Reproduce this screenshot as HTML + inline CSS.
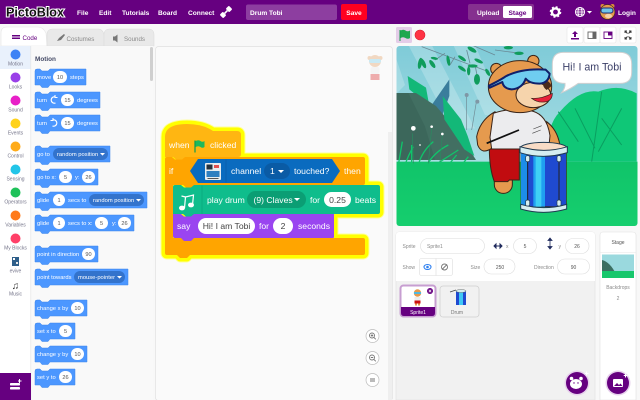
<!DOCTYPE html>
<html><head><meta charset="utf-8"><style>
html,body{margin:0;padding:0;width:640px;height:400px;overflow:hidden;background:#f8f8f8}
svg{display:block;font-family:"Liberation Sans",sans-serif;filter:blur(.3px)}
.m{font-size:6.6px;font-weight:700;fill:#fff}
.c{font-size:5px;fill:#75758a;text-anchor:middle}
.b{font-size:5.8px;fill:#fff}
.v{font-size:5.6px;fill:#555;text-anchor:middle}
.s{font-size:8.6px;fill:#fff}
.sv{font-size:8.6px;fill:#444;text-anchor:middle}
.p{fill:#4c97ff;stroke:#3f86ea;stroke-width:.5}
.l{font-size:5px;fill:#8a8a8a}
.d{font-size:5px;fill:#555;text-anchor:middle}
</style></head><body>
<svg width="640" height="400" viewBox="0 0 640 400" xmlns="http://www.w3.org/2000/svg">
<rect width="640" height="400" fill="#f8f8f8"/>

<!-- header -->
<rect width="640" height="24" fill="#660080"/>
<text x="6" y="16.500" font-size="12.600" font-weight="700" fill="#111" stroke="#fff" stroke-width="2" paint-order="stroke" textLength="58">PictoBlox</text>
<text class="m" x="77" y="15">File</text><text class="m" x="99" y="15">Edit</text><text class="m" x="122" y="15">Tutorials</text><text class="m" x="158" y="15">Board</text><text class="m" x="188" y="15">Connect</text>
<g transform="translate(226 12) rotate(45)" fill="#fff"><rect x="-2.500" y="-6.500" width="5" height="4.500" rx="1"/><rect x="-2.500" y="2" width="5" height="4.500" rx="1"/><rect x="-.8" y="-2" width="1.600" height="4"/></g>
<rect x="246" y="4.500" width="91" height="15.500" rx="2" fill="#8d3ea0"/>
<text class="m" x="250" y="15">Drum Tobi</text>
<rect x="341" y="4" width="26" height="16" rx="2" fill="#ff0020"/>
<text class="m" x="354" y="15" text-anchor="middle">Save</text>
<rect x="468" y="4" width="66" height="16" rx="2" fill="#85308f"/>
<text class="m" x="477" y="15">Upload</text>
<rect x="503" y="6" width="29" height="12" rx="1.500" fill="#fff"/>
<text x="517.500" y="15" font-size="6.600" font-weight="700" fill="#660080" text-anchor="middle">Stage</text>
<g transform="translate(555.500 12)"><circle r="3.600" fill="none" stroke="#fff" stroke-width="2.400"/><circle r="5" fill="none" stroke="#fff" stroke-width="1.600" stroke-dasharray="2 1.930"/></g>
<g transform="translate(580 12)" fill="none" stroke="#fff" stroke-width=".9"><circle r="4.600"/><ellipse rx="2" ry="4.600"/><path d="M-4.600 0H4.600M-4 -2.200H4M-4 2.200H4"/></g>
<path d="M587 11h5l-2.500 2.600z" fill="#fff"/>
<g transform="translate(607.500 12)"><circle cx="-5" cy="-6" r="2" fill="#d98a3c"/><circle cx="5" cy="-6" r="2" fill="#d98a3c"/><circle r="7.400" fill="#e49a4c" stroke="#3a2a20" stroke-width=".6"/><rect x="-6.500" y="-4" width="12" height="5" rx="2.400" fill="#6fc5e8" stroke="#1a2f7a"/><ellipse cx="1" cy="4" rx="3.500" ry="2.200" fill="#f5d2a8"/></g>
<text class="m" x="618" y="15">Login</text>

<!-- tabs -->
<path d="M1 46V33q0-6 6-6H38q5 0 8 6l1 13z" fill="#fff" stroke="#e5e5e5" stroke-width=".6"/>
<path d="M47 46V35q0-6 6-6H98q5 0 6 6V46z" fill="#e9e9e9" stroke="#ddd" stroke-width=".6"/>
<path d="M104 46V35q0-6 6-6H148q6 0 6 6V46z" fill="#e9e9e9" stroke="#ddd" stroke-width=".6"/>
<g fill="#660080"><rect x="12" y="35" width="8" height="1.500"/><rect x="12" y="37.500" width="8" height="1.500"/></g>
<text x="22.500" y="40" font-size="6.200" fill="#660080">Code</text>
<path d="M57 41l2-3 5-4 1 1-4 5z" fill="#777"/>
<text x="66.500" y="41" font-size="6.200" fill="#8a8a8a">Costumes</text>
<path d="M113 36.500h2l2.500-2v8l-2.500-2h-2z" fill="#777"/>
<text x="124" y="41" font-size="6.200" fill="#8a8a8a">Sounds</text>

<!-- categories -->
<rect x="0" y="46" width="31" height="354" fill="#fff"/>
<rect x="0" y="46" width="31" height="23" fill="#e9f1fc"/>
<rect x="31" y="46" width="122" height="354" fill="#f9f9f9"/>
<rect x="30.500" y="46" width=".6" height="354" fill="#e2e2e2"/>
<circle cx="15.500" cy="54.500" r="5" fill="#3d82f5"/><text class="c" x="15.500" y="65.500">Motion</text>
<circle cx="15.500" cy="77.500" r="5" fill="#9a3fe8"/><text class="c" x="15.500" y="88.500">Looks</text>
<circle cx="15.500" cy="100.500" r="5" fill="#e81fc8"/><text class="c" x="15.500" y="111.500">Sound</text>
<circle cx="15.500" cy="123.500" r="5" fill="#ffd21a"/><text class="c" x="15.500" y="134.500">Events</text>
<circle cx="15.500" cy="146.500" r="5" fill="#ffab19"/><text class="c" x="15.500" y="157.500">Control</text>
<circle cx="15.500" cy="169.500" r="5" fill="#22c5e8"/><text class="c" x="15.500" y="180.500">Sensing</text>
<circle cx="15.500" cy="192.500" r="5" fill="#1fc25a"/><text class="c" x="15.500" y="203.500">Operators</text>
<circle cx="15.500" cy="215.500" r="5" fill="#ff7a1a"/><text class="c" x="15.500" y="226.500">Variables</text>
<circle cx="15.500" cy="238.500" r="5" fill="#ff4068"/><text class="c" x="15.500" y="249.500">My Blocks</text>
<rect x="12" y="257" width="7" height="9" fill="#2f5f8a"/><rect x="13" y="258" width="2" height="2" fill="#fff"/><rect x="16" y="262" width="2" height="2" fill="#e8e8e8"/>
<text class="c" x="15.500" y="272.500">evive</text>
<text x="15.500" y="289" font-size="10" fill="#333" text-anchor="middle">♫</text>
<text class="c" x="15.500" y="295.500">Music</text>
<rect x="0" y="373" width="31" height="27" fill="#660080"/>
<g fill="#fff"><rect x="10" y="383" width="10" height="2.500" rx=".8"/><rect x="10" y="387" width="10" height="2.500" rx=".8"/><path d="M18 380.500h1v-1.500h1v1.500h1.500v1H20v1.500h-1V381.500h-1z"/></g>

<!-- palette -->
<text x="35" y="61" font-size="6.400" font-weight="700" fill="#444a66">Motion</text>
<rect x="150" y="47" width="3" height="34" rx="1.500" fill="#cfcfcf"/>
<path class="p" d="M35 71q0-2 2-2h3l2 2h6l2-2H86V85H50l-2 2.500h-6L40 85h-5z"/>
<path class="p" d="M35 94q0-2 2-2h3l2 2h6l2-2H100V108H50l-2 2.500h-6L40 108h-5z"/>
<path class="p" d="M35 117q0-2 2-2h3l2 2h6l2-2H100V131H50l-2 2.500h-6L40 131h-5z"/>
<path class="p" d="M35 148q0-2 2-2h3l2 2h6l2-2H110V162H50l-2 2.500h-6L40 162h-5z"/>
<path class="p" d="M35 171q0-2 2-2h3l2 2h6l2-2H98V185H50l-2 2.500h-6L40 185h-5z"/>
<path class="p" d="M35 194q0-2 2-2h3l2 2h6l2-2H147V208H50l-2 2.500h-6L40 208h-5z"/>
<path class="p" d="M35 217q0-2 2-2h3l2 2h6l2-2H134V231H50l-2 2.500h-6L40 231h-5z"/>
<path class="p" d="M35 248q0-2 2-2h3l2 2h6l2-2H98V262H50l-2 2.500h-6L40 262h-5z"/>
<path class="p" d="M35 271q0-2 2-2h3l2 2h6l2-2H128V285H50l-2 2.500h-6L40 285h-5z"/>
<path class="p" d="M35 302q0-2 2-2h3l2 2h6l2-2H87V316H50l-2 2.500h-6L40 316h-5z"/>
<path class="p" d="M35 325q0-2 2-2h3l2 2h6l2-2H75V339H50l-2 2.500h-6L40 339h-5z"/>
<path class="p" d="M35 348q0-2 2-2h3l2 2h6l2-2H87V362H50l-2 2.500h-6L40 362h-5z"/>
<path class="p" d="M35 371q0-2 2-2h3l2 2h6l2-2H75V385H50l-2 2.500h-6L40 385h-5z"/>
<g fill="#fff">
<rect x="53" y="71" width="14" height="12" rx="6"/>
<rect x="61" y="94" width="13" height="12" rx="6"/>
<rect x="61" y="117" width="13" height="12" rx="6"/>
<rect x="59" y="171" width="13" height="12" rx="6"/>
<rect x="82" y="171" width="13" height="12" rx="6"/>
<rect x="53" y="194" width="12" height="12" rx="6"/>
<rect x="53" y="217" width="12" height="12" rx="6"/>
<rect x="95" y="217" width="13" height="12" rx="6"/>
<rect x="118" y="217" width="13" height="12" rx="6"/>
<rect x="82" y="248" width="13" height="12" rx="6"/>
<rect x="71" y="302" width="13" height="12" rx="6"/>
<rect x="59" y="325" width="13" height="12" rx="6"/>
<rect x="71" y="348" width="13" height="12" rx="6"/>
<rect x="59" y="371" width="13" height="12" rx="6"/>
</g>
<g fill="#3373cc">
<rect x="53" y="148" width="55" height="12" rx="6"/>
<rect x="89" y="194" width="55" height="12" rx="6"/>
<rect x="74" y="271" width="51" height="12" rx="6"/>
</g>
<text class="b" x="37" y="79">move</text><text class="b" x="70" y="79">steps</text>
<text class="b" x="37" y="102">turn</text><text class="b" x="77" y="102">degrees</text>
<text class="b" x="37" y="125">turn</text><text class="b" x="77" y="125">degrees</text>
<text class="b" x="37" y="156">go to</text><text class="b" x="57" y="156">random position</text>
<text class="b" x="37" y="179">go to x:</text><text class="b" x="75" y="179">y:</text>
<text class="b" x="37" y="202">glide</text><text class="b" x="68" y="202">secs to</text><text class="b" x="93" y="202">random position</text>
<text class="b" x="37" y="225">glide</text><text class="b" x="68" y="225">secs to x:</text><text class="b" x="112" y="225">y:</text>
<text class="b" x="37" y="256">point in direction</text>
<text class="b" x="37" y="279">point towards</text><text class="b" x="78" y="279">mouse-pointer</text>
<text class="b" x="37" y="310">change x by</text>
<text class="b" x="37" y="333">set x to</text>
<text class="b" x="37" y="356">change y by</text>
<text class="b" x="37" y="379">set y to</text>
<path d="M100 153h5l-2.500 2.600zM136 199h5l-2.500 2.600zM117 276h5l-2.500 2.600z" fill="#fff"/>
<g fill="none" stroke="#fff" stroke-width="1.100"><path d="M55.500 103a3.200 3.200 0 1 1 0-6M55 95v2.500h2.500"/><path d="M52.500 126a3.200 3.200 0 1 0 0-6M53 118v2.500h-2.500"/></g>
<text class="v" x="60" y="79">10</text><text class="v" x="67.500" y="102">15</text><text class="v" x="67.500" y="125">15</text>
<text class="v" x="65.500" y="179">5</text><text class="v" x="88.500" y="179">26</text>
<text class="v" x="59" y="202">1</text><text class="v" x="59" y="225">1</text><text class="v" x="101.500" y="225">5</text><text class="v" x="124.500" y="225">26</text>
<text class="v" x="88.500" y="256">90</text><text class="v" x="77.500" y="310">10</text><text class="v" x="65.500" y="333">5</text><text class="v" x="77.500" y="356">10</text><text class="v" x="65.500" y="379">26</text>

<!-- workspace -->
<rect x="155.500" y="46.500" width="237" height="354" rx="3" fill="#fafafa" stroke="#e0e0e0" stroke-width=".7"/>
<rect x="388" y="132" width="4" height="268" fill="#efefef"/>
<g opacity=".45" transform="translate(375 67)"><circle cx="-5.500" cy="-9" r="2" fill="#e8b080"/><circle cx="5.500" cy="-9" r="2" fill="#e8b080"/><circle cy="-6" r="6" fill="#e8b080"/><rect x="-6" y="-8" width="12" height="4" rx="2" fill="#8fd8ef"/><rect x="-4.500" y="0" width="9" height="7" rx="2" fill="#eee"/><rect x="-4.500" y="7" width="9" height="6" fill="#e05050"/></g>
<g fill="#fff" stroke="#bbb" stroke-width=".7"><circle cx="372.500" cy="336" r="6.500"/><circle cx="372.500" cy="358" r="6.500"/><circle cx="372.500" cy="380" r="6.500"/></g>
<g fill="none" stroke="#777" stroke-width=".9"><circle cx="372" cy="335.500" r="2.500"/><path d="M373.800 337.300l2 2M370.800 335.500h2.400M372 334.300v2.400"/><circle cx="372" cy="357.500" r="2.500"/><path d="M373.800 359.300l2 2M370.800 357.500h2.400"/><path d="M370 379h5M370 381h5"/></g>

<!-- script -->
<path id="o" d="M165 137q0-13 22-13 16 0 26 7H237q4 0 4 4V157H363q2 0 2 2V185H378q2 0 2 2V212q0 2-2 2H334V238H363q2 0 2 2V253q0 2-2 2H190l-3 3h-7l-3-3H167q-2 0-2-2z" fill="#ffff9a" stroke="#ffff9a" stroke-width="9" stroke-linejoin="round"/>
<path d="M165 137q0-13 22-13 16 0 26 7H237q4 0 4 4V157H363q2 0 2 2V185H378q2 0 2 2V212q0 2-2 2H334V238H363q2 0 2 2V253q0 2-2 2H190l-3 3h-7l-3-3H167q-2 0-2-2z" fill="#ffff00" stroke="#ffff00" stroke-width="7" stroke-linejoin="round"/>
<path d="M165 137q0-13 22-13 16 0 26 7H237q4 0 4 4V154q0 3-3 3H186l-3 2.500h-7L173 157h-8z" fill="#ffb612"/>
<path d="M165 159q0-2 2-2h5l3 2.500h7l3-2.500H363q2 0 2 2v24q0 2-2 2H196l-3 2.500h-7l-3-2.500H173V238H363q2 0 2 2v13q0 2-2 2H190l-3 3h-7l-3-3H167q-2 0-2-2z" fill="#ffa500"/>
<path d="M173 187q0-2 2-2h6l3 2.500h7l3-2.500H378q2 0 2 2v25q0 2-2 2H196l-3 2.500h-7l-3-2.500H173z" fill="#0fbd8c"/>
<path d="M173 214h8l3 2.500h7l3-2.500H334V237q0 1-1 1H194l-3 3h-7l-3-3h-6q-2 0-2-2z" fill="#9a45f0"/>
<text class="s" x="169" y="148">when</text>
<path d="M195 140.500v12" stroke="#0a9a50" stroke-width="1.200"/><path d="M195.500 141q3-1.500 5 0t4 0v6q-2 1.500-4 0t-5 0z" fill="#1fb85c"/>
<text class="s" x="210" y="148">clicked</text>
<text class="s" x="169" y="174">if</text>
<text class="s" x="344" y="174">then</text>
<path d="M190 171l8-12H332l8 12-8 12H198z" fill="#0a6bbf"/>
<path d="M226 159.500v23" stroke="#0a5ba5" stroke-width=".7"/>
<rect x="205" y="163" width="16" height="17" rx="1" fill="#e8edf0"/>
<rect x="206.500" y="164.500" width="6" height="5" fill="#26323d"/><rect x="214" y="165" width="5" height="3" fill="#e25050"/><rect x="206.500" y="171" width="13" height="6" fill="#2f7fc0"/><rect x="207.500" y="178" width="11" height="1" fill="#555"/>
<text class="s" x="231" y="174">channel</text>
<rect x="264" y="163" width="26" height="16" rx="8" fill="#0a5ba5"/>
<text class="s" x="270" y="174">1</text><path d="M278 170h6l-3 3z" fill="#fff"/>
<text class="s" x="294" y="174">touched?</text>
<path d="M202 185.500v28.500" stroke="#0ba57a" stroke-width=".7"/>
<g fill="#fff"><ellipse cx="182" cy="208" rx="3" ry="2.400"/><ellipse cx="191" cy="205" rx="3" ry="2.400"/></g><path d="M184.500 208l1-11 8-2-1 10M185.500 197l-4-1" fill="none" stroke="#fff" stroke-width="1.200"/>
<text class="s" x="207" y="203">play drum</text>
<rect x="247" y="191" width="59" height="17" rx="8.500" fill="#0b9e74"/>
<text class="s" x="253.500" y="203">(9) Claves</text><path d="M294 198h6l-3 3z" fill="#fff"/>
<text class="s" x="310" y="203">for</text>
<rect x="324" y="192" width="27" height="15" rx="7.500" fill="#fff"/><text class="sv" x="337.500" y="203">0.25</text>
<text class="s" x="355" y="203">beats</text>
<text class="s" x="177" y="229">say</text>
<rect x="198" y="218" width="57" height="16" rx="8" fill="#fff"/><text class="sv" x="226.500" y="229">Hi! I am Tobi</text>
<text class="s" x="259" y="229">for</text>
<rect x="273" y="218" width="20" height="16" rx="8" fill="#fff"/><text class="sv" x="283" y="229">2</text>
<text class="s" x="298" y="229">seconds</text>

<!-- stage controls -->
<rect x="396" y="27" width="16" height="16" rx="1.500" fill="#e4cde8"/>
<path d="M400 30v11" stroke="#0f9d4a" stroke-width="1"/><path d="M400.500 30.500q3-1.500 5 0t4.500 0v7.500q-2 1.500-4.500 0t-5 0z" fill="#1fa84f"/>
<circle cx="420" cy="35" r="5" fill="#ff3344" stroke="#d81f30" stroke-width=".6"/>
<g fill="#fff" stroke="#e5e5e5" stroke-width=".6"><rect x="567" y="27" width="16" height="16" rx="2"/><rect x="584" y="27" width="16" height="16" rx="2"/><rect x="600" y="27" width="16" height="16" rx="2"/><rect x="620" y="27" width="16" height="16" rx="2"/></g>
<path d="M575 31l3 3h-2v3h-2v-3h-2zM571 38h8v1.500h-8z" fill="#660080"/>
<rect x="588" y="32" width="8" height="6.500" fill="none" stroke="#666" stroke-width=".9"/><rect x="592.500" y="32" width="3.500" height="6.500" fill="#666"/>
<rect x="604" y="32" width="8" height="6.500" fill="none" stroke="#660080" stroke-width=".9"/><rect x="608" y="32" width="4" height="3.500" fill="#660080"/>
<path d="M625 31l2.500 2.500M631 31l-2.500 2.500M625 39l2.500-2.500M631 39l-2.500-2.500M625 33v-2h2M629 31h2v2M625 37v2h2M629 39h2v-2" fill="none" stroke="#333" stroke-width=".9"/>

<!-- stage -->
<defs><clipPath id="st"><rect x="396.500" y="46" width="241" height="180" rx="3"/></clipPath>
<linearGradient id="sky" x1="0" y1="0" x2="0" y2="1"><stop offset="0" stop-color="#7fcbd8"/><stop offset="1" stop-color="#bfe8ea"/></linearGradient>
<linearGradient id="gr" x1="0" y1="0" x2="0" y2="1"><stop offset="0" stop-color="#10c46a"/><stop offset="1" stop-color="#16cf6e"/></linearGradient></defs>
<g clip-path="url(#st)">
<g transform="translate(395 45) scale(.33333)">
<rect width="735" height="555" fill="url(#sky)"/>
<g fill="#fff" opacity=".22"><path d="M40 0L110 0 240 250 170 250z"/><path d="M175 0L240 0 330 210 270 210z"/><path d="M0 30L30 120 0 150z"/></g>
<path d="M80 5L280 80M150 25L120 45M180 35L165 60M215 15L225 55M240 60L250 110M230 0L300 30M300 15L375 25" fill="none" stroke="#6a8a96" stroke-width="2.500"/>
<g fill="#0f9c5c">
<ellipse cx="75" cy="55" rx="6" ry="17" transform="rotate(10 75 55)"/><ellipse cx="85" cy="55" rx="6" ry="16" transform="rotate(-25 85 55)"/><ellipse cx="112" cy="57" rx="6" ry="14" transform="rotate(-35 112 57)"/><ellipse cx="118" cy="40" rx="11" ry="4" transform="rotate(10 118 40)"/>
<ellipse cx="160" cy="47" rx="5" ry="16" transform="rotate(-10 160 47)"/><ellipse cx="201" cy="40" rx="14" ry="5" transform="rotate(35 201 40)"/><ellipse cx="201" cy="71" rx="14" ry="5" transform="rotate(35 201 71)"/>
<ellipse cx="231" cy="14" rx="15" ry="6" transform="rotate(30 231 14)"/><ellipse cx="233" cy="63" rx="15" ry="5"/><ellipse cx="251" cy="48" rx="14" ry="5" transform="rotate(25 251 48)"/><ellipse cx="221" cy="78" rx="5" ry="13"/><ellipse cx="246" cy="103" rx="9" ry="16"/><ellipse cx="278" cy="82" rx="5" ry="12" transform="rotate(-30 278 82)"/><ellipse cx="340" cy="8" rx="14" ry="5"/><ellipse cx="372" cy="25" rx="14" ry="5"/>
</g>
<path d="M215 145v110M245 165l-15 90" stroke="#6f8a94" stroke-width="2" fill="none"/><g fill="#7f97a5"><circle cx="215" cy="150" r="6"/><circle cx="247" cy="170" r="6"/></g>
<path d="M38 93l55 35 10 55-60-50z" fill="#13b878"/>
<path d="M108 183l55-80v50l-20 55z" fill="#3a7d9c"/>
<path d="M3 144H63l60 39 69 81 51 81H3z" fill="#426f62"/>
<path d="M3 144H40l50 100 30 100H3z" fill="#3a6458" opacity=".7"/>
<path d="M143 153l55 70 20 50 20 60-30-20-60-90z" fill="#13b878"/>
<path d="M470 350q-25-100 25-150 60-70 115-60 60-25 115 5V350z" fill="#0fc777"/>
<path d="M620 140l-30 210M540 190l60 120M680 190l-70 130M490 200l60 90M620 220l60 80" stroke="#0a9e60" stroke-width="3" fill="none"/>
<rect y="350" width="735" height="205" fill="url(#gr)"/>
<path d="M10 360l12-70M30 360q10-30 25-55M70 360q10-40 45-70M95 360q25-40 65-60M120 360l70-45M160 360l25-30M200 360l20-25M50 360l0-60" stroke="#10c46a" stroke-width="4" fill="none"/>
<path d="M55 355l-3-90M100 355l10-105M135 350l7-80" stroke="#2a8a60" stroke-width="2" fill="none"/>
<g fill="#fff"><circle cx="55" cy="250" r="7"/><circle cx="110" cy="245" r="4"/><circle cx="142" cy="267" r="4"/><circle cx="75" cy="300" r="2.500"/></g>
<!-- bear -->
<g stroke="#3a2418" stroke-width="3">
<rect x="298" y="340" width="54" height="105" rx="26" fill="#e59a4e"/>
<path d="M283 310h90v95h-30l-5 5h-40q-15-40-15-100z" fill="#c10c10"/>
<path d="M455 230q40 30 42 95l-40-10z" fill="#e59a4e"/>
<path d="M245 275q10-50 55-75l15 40-25 70q-30 20-42-10z" fill="#e59a4e"/>
<path d="M295 205q50-18 110-8 50 8 60 75l-5 50H375v-10H290l-5-35z" fill="#ececee"/>
<circle cx="304" cy="72" r="17" fill="#e59a4e"/><circle cx="415" cy="48" r="17" fill="#e59a4e"/>
<ellipse cx="375" cy="125" rx="95" ry="78" fill="#e59a4e"/>
<ellipse cx="415" cy="150" rx="52" ry="38" fill="#f6d4ac"/>
</g>
<path d="M445 105q18 0 25 18l-15 12q-15-10-10-30z" fill="#4a2a1a"/>
<path d="M410 160q30 2 62-15 0 20-18 25-25 5-44-10z" fill="#e8203a" stroke="#3a2418" stroke-width="2"/>
<path d="M282 122q40-20 50-28 50-25 120-20l12 12q-3 28-30 30-30 0-42-15-10 30-42 32-25-2-28-22l-38 17z" fill="#6fcdf0" stroke="#10206a" stroke-width="6" stroke-linejoin="round"/>
<path d="M275 295L372 255" stroke="#111" stroke-width="5"/>
<path d="M415 252l25-10M412 265l25-10" stroke="#444" stroke-width="2"/>
<!-- drum -->
<rect x="378" y="320" width="136" height="165" fill="#1f4ad0" stroke="#3a2418" stroke-width="2"/>
<rect x="415" y="320" width="35" height="165" fill="#1fa0f0"/><rect x="422" y="320" width="17" height="165" fill="#3fd0f5"/><rect x="378" y="320" width="18" height="165" fill="#1c8de8"/>
<path d="M398 340v140M492 340v140" stroke="#222" stroke-width="3"/>
<ellipse cx="446" cy="310" rx="71" ry="18" fill="#f8dcc6" stroke="#1f3a50" stroke-width="3"/>
<path d="M375 305v18q70 22 142 0v-18q-70 22-142 0z" fill="#d5eef0" stroke="#1f3a50" stroke-width="3"/>
<path d="M377 478v14q68 20 138 0v-14q-70 20-138 0z" fill="#d5eef0" stroke="#1f3a50" stroke-width="3"/>
<g fill="#d5eef0" stroke="#1f3a50" stroke-width="2"><rect x="392" y="332" width="12" height="18" rx="5"/><rect x="486" y="332" width="12" height="18" rx="5"/><rect x="392" y="465" width="12" height="18" rx="5"/><rect x="486" y="465" width="12" height="18" rx="5"/></g>
<!-- bubble -->
<path d="M505 22H675q35 0 35 35v25q0 33-35 33H550q-25 18-50 28 12-15 10-28-38 0-38-33V57q0-35 33-35z" fill="#fff" stroke="#d0d0d0" stroke-width="3"/>
<text x="591" y="77" font-size="32" fill="#3c4068" text-anchor="middle">Hi! I am Tobi</text>
</g>
</g>

<!-- sprite pane -->
<path d="M396 400V235q0-3 3-3H592q3 0 3 3V400z" fill="#f1f1f1" stroke="#e0e0e0" stroke-width=".6"/>
<path d="M396 281V235q0-3 3-3H592q3 0 3 3V281z" fill="#fff"/>
<path d="M600 400V235q0-3 3-3H632q4 0 4 3V400z" fill="#fff" stroke="#e0e0e0" stroke-width=".6"/>
<path d="M600 252.500H636" stroke="#e5e5e5" stroke-width=".6"/>
<text class="l" x="402.500" y="248">Sprite</text>
<g fill="#fff" stroke="#dcdcdc" stroke-width=".6"><rect x="420.500" y="238.500" width="64" height="15" rx="7.500"/><rect x="513.500" y="238.500" width="23" height="15" rx="7.500"/><rect x="565.500" y="238.500" width="23.500" height="15" rx="7.500"/>
<rect x="484" y="259" width="31" height="15" rx="7.500"/><rect x="557.500" y="259" width="32" height="15" rx="7.500"/>
<rect x="419.500" y="258.500" width="33" height="17" rx="2"/></g>
<text class="l" x="427" y="248">Sprite1</text>
<path d="M494 246h8M494 246l2-2v4zM502 246l-2-2v4z" fill="#1f2a5c" stroke="#1f2a5c" stroke-width="1"/>
<text class="l" x="506" y="248">x</text>
<text class="d" x="525" y="248">5</text>
<path d="M550 239v9M550 238l-2 2.500h4zM550 249l-2-2.500h4z" fill="#1f2a5c" stroke="#1f2a5c" stroke-width=".8"/>
<text class="l" x="558.500" y="248">y</text>
<text class="d" x="577" y="248">26</text>
<text class="l" x="402.500" y="269">Show</text>
<path d="M436 258.500v17" stroke="#dcdcdc" stroke-width=".6"/>
<ellipse cx="427.500" cy="267" rx="3.500" ry="2.500" fill="none" stroke="#2f80f0" stroke-width="1.100"/><circle cx="427.500" cy="267" r="1.300" fill="#2f80f0"/>
<circle cx="444.500" cy="267" r="3" fill="none" stroke="#777" stroke-width=".9"/><path d="M442 269.500l5-5" stroke="#777" stroke-width=".9"/>
<text class="l" x="470.500" y="269">Size</text>
<text class="d" x="500" y="269">250</text>
<text class="l" x="534" y="269">Direction</text>
<text class="d" x="573.500" y="269">90</text>
<!-- sprite tiles -->
<rect x="400.500" y="285.500" width="35" height="31" rx="3" fill="#fff" stroke="#c79ed1" stroke-width="2"/>
<path d="M401 307H435V313q0 3-3 3H404q-3 0-3-3z" fill="#660080"/>
<text x="418" y="314" font-size="5" fill="#fff" text-anchor="middle">Sprite1</text>
<circle cx="430" cy="291" r="3" fill="#660080"/><path d="M428.800 289.800l2.400 2.400M431.200 289.800l-2.400 2.400" stroke="#fff" stroke-width=".7"/>
<g transform="translate(417.500 297)"><circle cy="-4" r="3.700" fill="#e59a4e"/><rect x="-3.500" y="-5" width="7" height="2" fill="#4fb8e0"/><rect x="-3" y="0" width="6" height="4" fill="#eee"/><rect x="-3" y="3.500" width="6" height="3" fill="#c11"/><rect x="-2.500" y="6.500" width="2" height="2" fill="#e59a4e"/><rect x=".5" y="6.500" width="2" height="2" fill="#e59a4e"/></g>
<rect x="440" y="286" width="39" height="31" rx="3" fill="#f1f1f1" stroke="#d0d0d0" stroke-width=".8"/>
<text x="457" y="314" font-size="5" fill="#777" text-anchor="middle">Drum</text>
<path d="M450 292l6-2" stroke="#444" stroke-width=".7"/>
<rect x="456" y="291" width="10" height="14" fill="#1f4ad0"/><rect x="459" y="291" width="4" height="14" fill="#3fc8f5"/><ellipse cx="461" cy="291" rx="5" ry="1.500" fill="#d5eef0" stroke="#555" stroke-width=".4"/>
<!-- stage thumb -->
<rect x="602" y="254.500" width="32" height="23.500" fill="#9ad9de"/>
<path d="M602 260q8 2 14 14h-14z" fill="#3c6f62"/>
<rect x="602" y="271" width="32" height="7" fill="#17c76c"/>
<text class="l" x="618" y="289" text-anchor="middle">Backdrops</text>
<text class="l" x="618" y="300" text-anchor="middle">2</text>
<text x="618" y="244" font-size="5" fill="#555" text-anchor="middle">Stage</text>
<!-- fab buttons -->
<circle cx="577" cy="383" r="12.500" fill="#e7d2ec"/><circle cx="577" cy="383" r="11" fill="#660080"/>
<circle cx="571.500" cy="378.500" r="1.800" fill="#fff"/><circle cx="581" cy="378.500" r="1.800" fill="#fff"/><ellipse cx="576" cy="384" rx="6" ry="5" fill="#fff"/><circle cx="574" cy="383" r=".7" fill="#660080"/><circle cx="578" cy="383" r=".7" fill="#660080"/><path d="M585 373h1v-1.500h1v1.500h1.500v1H587v1.500h-1V374h-1.500z" fill="#fff"/>
<circle cx="618" cy="383" r="12.500" fill="#e7d2ec"/><circle cx="618" cy="383" r="11" fill="#660080"/>
<rect x="613" y="379" width="10" height="8" rx="1" fill="#fff"/><path d="M614 386l3-3 2 2 1.500-1.500 2 2.500z" fill="#660080"/><path d="M624 375h1v-1.500h1v1.500h1.500v1H626v1.500h-1V376h-1.500z" fill="#fff"/>
</svg>
</body></html>
